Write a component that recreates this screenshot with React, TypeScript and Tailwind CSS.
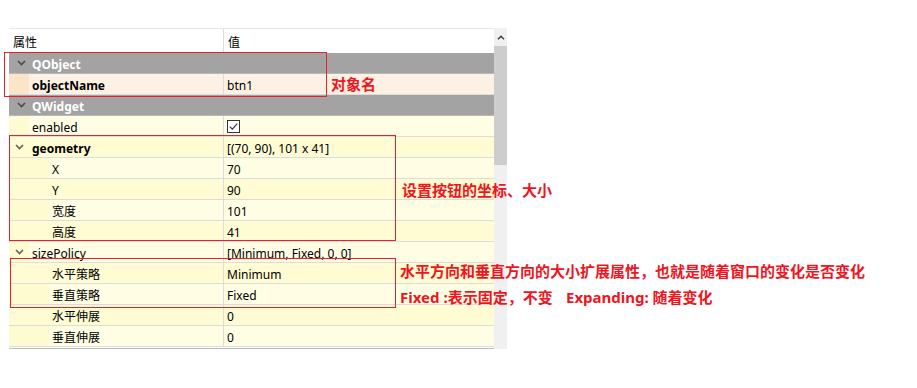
import React from 'react';

type Tone = 'peach' | 'light' | 'dark';

type Row =
  | { kind: 'cat'; name: string }
  | {
      kind: 'prop';
      name: string;
      value?: React.ReactNode;
      level: 0 | 1;
      bold?: boolean;
      expand?: boolean;
      tone: Tone;
    };

const Checkbox = () => (
  <svg width="13" height="13" viewBox="0 0 13 13" className="block">
    <rect x="0.5" y="0.5" width="12" height="12" fill="#ffffff" stroke="#333333" />
    <path d="M2.8 6.6 L5.3 9.1 L10.3 3.6" fill="none" stroke="#333333" strokeWidth="1.2" />
  </svg>
);

const rows: Row[] = [
  { kind: 'cat', name: 'QObject' },
  { kind: 'prop', name: 'objectName', value: 'btn1', level: 0, bold: true, tone: 'peach' },
  { kind: 'cat', name: 'QWidget' },
  { kind: 'prop', name: 'enabled', value: <Checkbox />, level: 0, tone: 'light' },
  { kind: 'prop', name: 'geometry', value: '[(70, 90), 101 x 41]', level: 0, bold: true, expand: true, tone: 'dark' },
  { kind: 'prop', name: 'X', value: '70', level: 1, tone: 'light' },
  { kind: 'prop', name: 'Y', value: '90', level: 1, tone: 'dark' },
  { kind: 'prop', name: '宽度', value: '101', level: 1, tone: 'light' },
  { kind: 'prop', name: '高度', value: '41', level: 1, tone: 'dark' },
  { kind: 'prop', name: 'sizePolicy', value: '[Minimum, Fixed, 0, 0]', level: 0, expand: true, tone: 'light' },
  { kind: 'prop', name: '水平策略', value: 'Minimum', level: 1, tone: 'dark' },
  { kind: 'prop', name: '垂直策略', value: 'Fixed', level: 1, tone: 'light' },
  { kind: 'prop', name: '水平伸展', value: '0', level: 1, tone: 'dark' },
  { kind: 'prop', name: '垂直伸展', value: '0', level: 1, tone: 'light' },
];

const toneBg: Record<Tone, string> = {
  peach: 'bg-[#fdf1e3]',
  light: 'bg-[#fffee4]',
  dark: 'bg-[#fffbd2]',
};

const toneGutter: Record<Tone, string> = {
  peach: 'bg-[#fce4c8]',
  light: 'bg-[#fffbd0]',
  dark: 'bg-[#fffbd2]',
};

const Chevron = ({ color }: { color: string }) => (
  <svg width="9" height="6" viewBox="0 0 9 6" className="block">
    <path d="M1 1 L4.5 4.5 L8 1" fill="none" stroke={color} strokeWidth="1.6" />
  </svg>
);

function PropRow({ row }: { row: Row }) {
  if (row.kind === 'cat') {
    return (
      <div className="flex h-[21px] items-center bg-[#a3a3a3] border-b border-[#b8b8b8]">
        <div className="flex w-[23px] shrink-0 justify-center pl-[1px]">
          <Chevron color="#4a4a4a" />
        </div>
        <span className="pt-[3px] font-bold text-white">{row.name}</span>
      </div>
    );
  }
  return (
    <div className={`flex h-[21px] border-b border-[#dcdcdc] ${toneBg[row.tone]}`}>
      <div className="flex w-[215px] shrink-0 border-r border-[#dcdcdc]">
        <div
          className={`flex shrink-0 items-center justify-center ${toneGutter[row.tone]} ${
            row.level === 0 ? 'w-[20px]' : 'w-[40px]'
          }`}
        >
          {row.expand && <Chevron color="#606060" />}
        </div>
        <span className={`flex items-center pl-[3px] pt-[4px] ${row.bold ? 'font-bold' : ''}`}>{row.name}</span>
      </div>
      <div className={`flex items-center pl-[3px] ${typeof row.value === 'string' ? 'pt-[4px]' : ''}`}>
        {row.value}
      </div>
    </div>
  );
}

export default function App() {
  return (
    <div className="relative h-[388px] w-[917px] overflow-hidden bg-white font-['Noto_Sans','Noto_Sans_CJK_SC',sans-serif] text-[12px] text-black">
      <div className="flex pl-[9px] pt-[28px]">
        {/* property table */}
        <div className="w-[485px] border-b border-[#bcbcbc]">
          <div className="flex h-[25px] border-t border-[#e6e6e6] bg-white">
            <div className="flex w-[215px] items-center border-r border-[#dcdcdc] pl-[4px] pt-[3px]">属性</div>
            <div className="flex items-center pl-[4px] pt-[3px]">值</div>
          </div>
          {rows.map((r, i) => (
            <PropRow key={i} row={r} />
          ))}
        </div>

        {/* scrollbar */}
        <div className="flex h-[321px] w-[13px] flex-col bg-[#f0f0f0]">
          <div className="flex h-[18px] items-center justify-center">
            <svg width="8" height="5" viewBox="0 0 8 5" className="block">
              <path d="M1 4.2 L4 1.2 L7 4.2" fill="none" stroke="#404040" strokeWidth="1.5" />
            </svg>
          </div>
          <div className="h-[119px] bg-[#cdcdcd]" />
        </div>
      </div>

      {/* red annotations */}
      <div className="absolute left-[4px] top-[52px] h-[45px] w-[323px] border border-[#e8202a]" />
      <div className="absolute left-[9px] top-[135px] h-[106px] w-[387px] border border-[#e8202a]" />
      <div className="absolute left-[10px] top-[258px] h-[50px] w-[386px] border border-[#e8202a]" />

      <div className="absolute left-[331px] top-[74px] font-['Noto_Sans_CJK_SC',sans-serif] text-[15px] font-bold leading-[20px] text-[#f0141e]">
        对象名
      </div>
      <div className="absolute left-[402px] top-[180px] font-['Noto_Sans_CJK_SC',sans-serif] text-[15px] font-bold leading-[20px] text-[#f0141e]">
        设置按钮的坐标、大小
      </div>
      <div className="absolute left-[400px] top-[261px] font-['Noto_Sans_CJK_SC',sans-serif] text-[15px] font-bold leading-[20px] text-[#f0141e]">
        水平方向和垂直方向的大小扩展属性，也就是随着窗口的变化是否变化
      </div>
      <div className="absolute left-[400px] top-[287px] flex font-['Noto_Sans','Noto_Sans_CJK_SC',sans-serif] text-[15px] font-bold leading-[20px] text-[#f0141e]">
        <span className="w-[166px]">Fixed :表示固定，不变</span>
        <span>Expanding: 随着变化</span>
      </div>
    </div>
  );
}
